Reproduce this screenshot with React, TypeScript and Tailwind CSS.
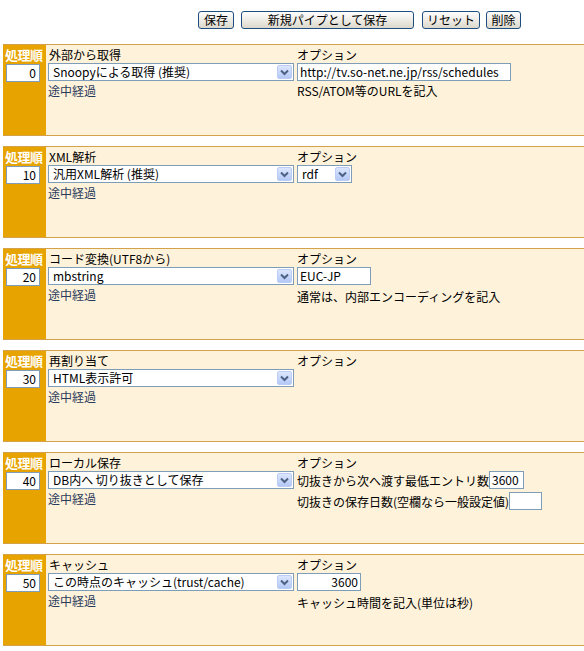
import type { ReactNode } from "react";

function Arrow() {
  return (
    <span className="absolute right-[1px] top-[1px] bottom-[1px] flex w-[15px] items-center justify-center rounded-[2px] border border-[#bccdf5] bg-gradient-to-b from-[#dce6fd] to-[#b5c9f7]">
      <svg width="9" height="7" viewBox="0 0 9 7">
        <path d="M1 1.5 L4.5 5 L8 1.5" fill="none" stroke="#4d6185" strokeWidth="2" />
      </svg>
    </span>
  );
}

function Select({ value, w }: { value: string; w: string }) {
  return (
    <div className={`relative h-[18px] border border-[#7f9db9] bg-white pl-[4px] pr-[18px] text-[12px] leading-[16px] text-black ${w}`}>
      <span className="block truncate">{value}</span>
      <Arrow />
    </div>
  );
}

function Field({ value, w, right }: { value: string; w: string; right?: boolean }) {
  return (
    <div className={`h-[18px] border border-[#7f9db9] bg-white px-[2px] text-[12px] leading-[16px] text-black ${w} ${right ? "text-right" : ""}`}>
      {value}
    </div>
  );
}

function Btn({ children, w }: { children: ReactNode; w: string }) {
  return (
    <div className={`flex h-[18px] items-center justify-center rounded-[3px] border border-[#1c4f80] bg-gradient-to-b from-[#ffffff] to-[#dcd8cc] text-[12px] leading-none text-black ${w}`}>
      {children}
    </div>
  );
}

type Step = {
  order: string;
  title: string;
  select: string;
  options: ReactNode;
};

function Block({ step }: { step: Step }) {
  return (
    <div className="flex h-[92px] w-[600px] border-y border-[#d3a24a] bg-[#fff2da]">
      <div className="w-[43px] shrink-0 bg-[#e7a300] pl-[2px] pt-[2px]">
        <div className="text-[13px] font-bold leading-[15px] tracking-[-0.5px] text-white">処理順</div>
        <div className="mt-[2px] ml-[1px] h-[18px] w-[34px] border border-[#7f9db9] bg-white pr-[3px] text-right text-[12px] leading-[16px] text-black">
          {step.order}
        </div>
      </div>
      <div className="w-[250px] shrink-0 pl-[2px] pt-[2px]">
        <div className="pl-[1px] leading-[15px]">{step.title}</div>
        <div className="mt-[1px]">
          <Select value={step.select} w="w-[246px]" />
        </div>
        <div className="mt-[2px] text-[#2a3b5c] leading-[15px]">途中経過</div>
      </div>
      <div className="flex-1 pl-[1px] pt-[2px]">
        <div className="leading-[15px]">オプション</div>
        <div className="mt-[1px]">{step.options}</div>
      </div>
    </div>
  );
}

const steps: Step[] = [
  {
    order: "0",
    title: "外部から取得",
    select: "Snoopyによる取得 (推奨)",
    options: (
      <>
        <Field value="http://tv.so-net.ne.jp/rss/schedules" w="w-[214px]" />
        <div className="mt-[2px] leading-[15px]">RSS/ATOM等のURLを記入</div>
      </>
    ),
  },
  {
    order: "10",
    title: "XML解析",
    select: "汎用XML解析 (推奨)",
    options: <Select value="rdf" w="w-[55px]" />,
  },
  {
    order: "20",
    title: "コード変換(UTF8から)",
    select: "mbstring",
    options: (
      <>
        <Field value="EUC-JP" w="w-[74px]" />
        <div className="mt-[4px] leading-[15px]">通常は、内部エンコーディングを記入</div>
      </>
    ),
  },
  {
    order: "30",
    title: "再割り当て",
    select: "HTML表示許可",
    options: null,
  },
  {
    order: "40",
    title: "ローカル保存",
    select: "DB内へ 切り抜きとして保存",
    options: (
      <>
        <div className="flex items-center">
          <span className="leading-[15px]">切抜きから次へ渡す最低エントリ数</span>
          <Field value="3600" w="w-[35px]" />
        </div>
        <div className="mt-[3px] flex items-center">
          <span className="leading-[15px]">切抜きの保存日数(空欄なら一般設定値)</span>
          <Field value="" w="w-[33px]" />
        </div>
      </>
    ),
  },
  {
    order: "50",
    title: "キャッシュ",
    select: "この時点のキャッシュ(trust/cache)",
    options: (
      <>
        <Field value="3600" w="w-[64px]" right />
        <div className="mt-[4px] leading-[15px]">キャッシュ時間を記入(単位は秒)</div>
      </>
    ),
  },
];

export default function App() {
  return (
    <div
      className="h-[651px] w-[584px] overflow-hidden bg-white text-[12px] text-black"
      style={{ fontFamily: '"Noto Sans CJK JP", "DejaVu Sans", sans-serif' }}
    >
      <div className="flex pl-[198px] pt-[11px]">
        <Btn w="w-[36px]">保存</Btn>
        <div className="w-[7px]" />
        <Btn w="w-[173px]">新規パイプとして保存</Btn>
        <div className="w-[8px]" />
        <Btn w="w-[58px]">リセット</Btn>
        <div className="w-[6px]" />
        <Btn w="w-[35px]">削除</Btn>
      </div>
      <div className="mt-[15px] flex flex-col gap-[10px] pl-[3px]">
        {steps.map((s) => (
          <Block key={s.order} step={s} />
        ))}
      </div>
    </div>
  );
}
